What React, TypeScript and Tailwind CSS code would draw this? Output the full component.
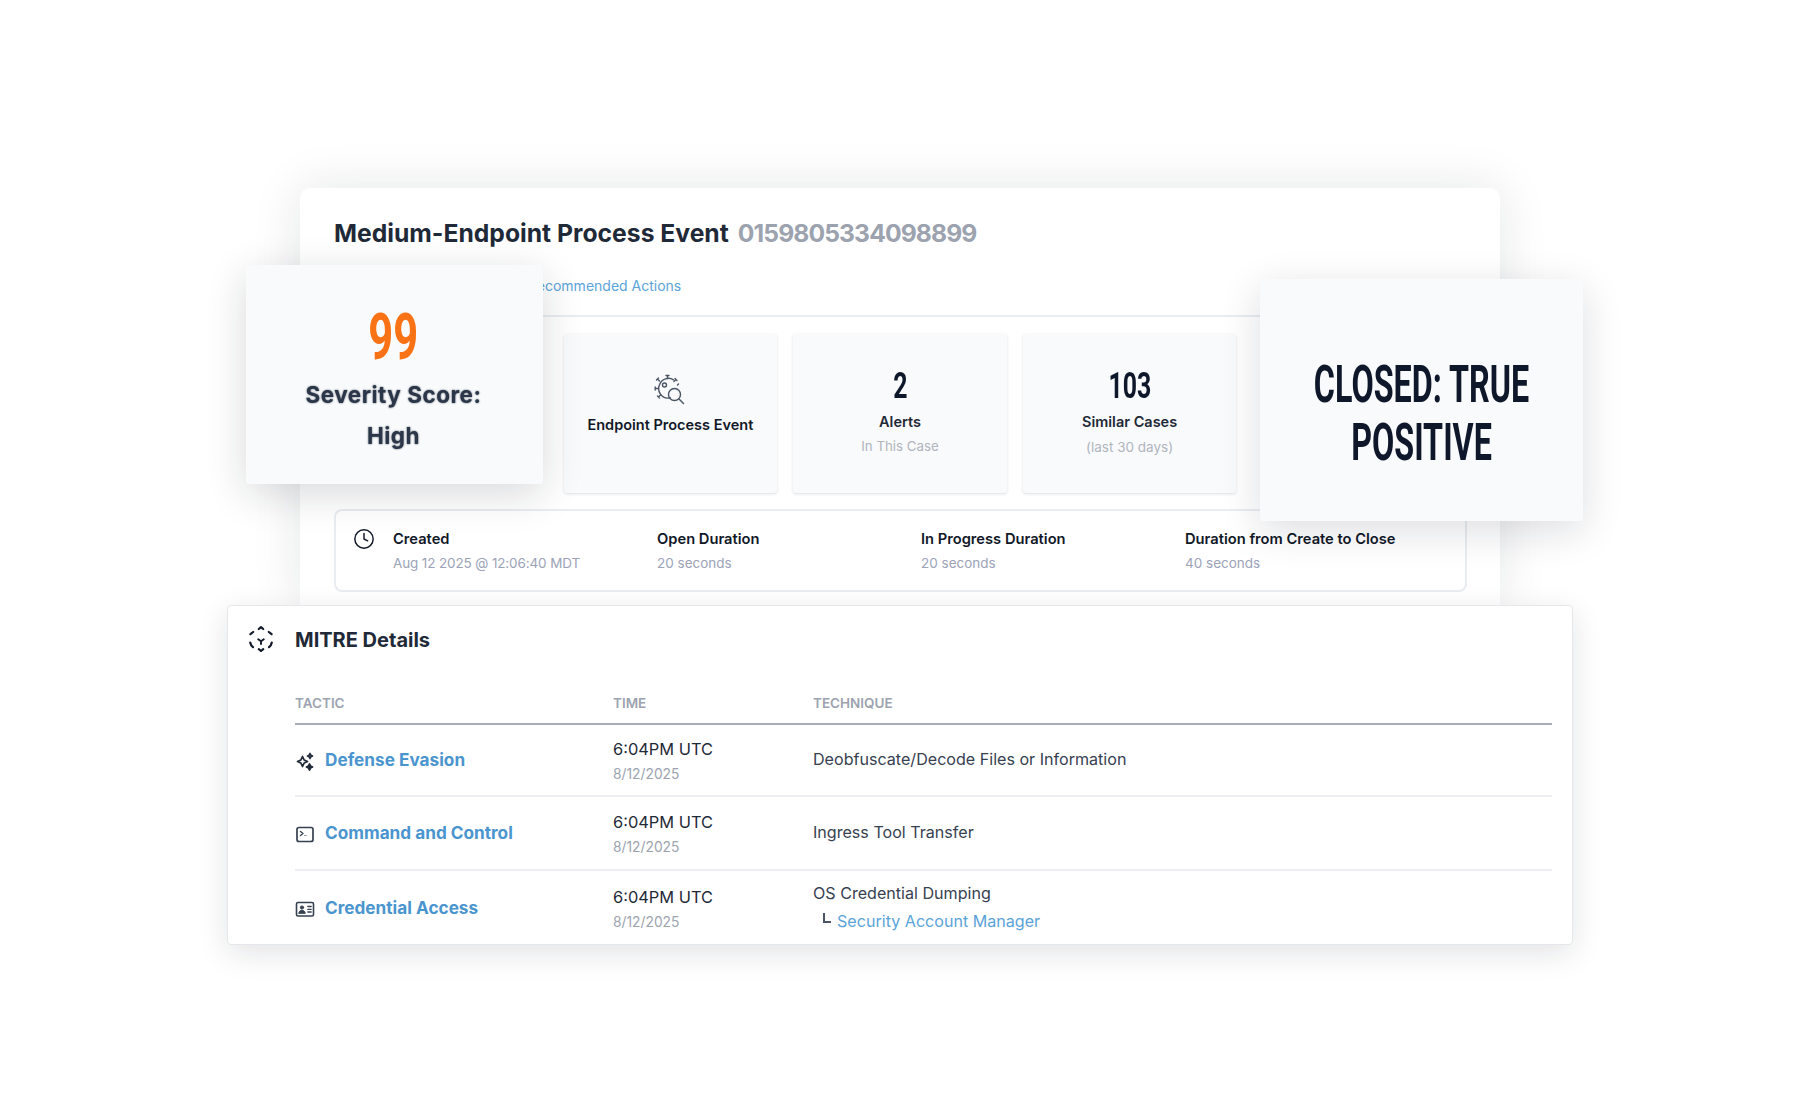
import { Clock } from 'lucide-react';

const body = 'font-["Inter","Liberation_Sans",sans-serif]';
const narrow = 'font-["Roboto","Liberation_Sans",sans-serif] font-bold inline-block whitespace-nowrap';

function VirusSearchIcon() {
  return (
    <svg width="32" height="32" viewBox="0 0 32 32" fill="none" stroke="#4b5563" strokeWidth="1.4" strokeLinecap="round">
      <path d="M19.5 5.8A9.5 9.5 0 0 0 5.6 10.5a9.5 9.5 0 0 0 .7 9.4 9.5 9.5 0 0 0 10 3.9" />
      <circle cx="10.5" cy="11" r="2" />
      <circle cx="20.5" cy="20.5" r="6" />
      <path d="M25 25l4.5 4.5" />
      <path d="M13.5 4.5V1.5M12 1.5h3M20 7.5l2-2M21 4.5l2 2M5.5 7l-2-2M2.5 6l2-2M3.8 14.5H1.2M1.2 13v3M6.5 21l-2 2M3.5 22l2 2M23.5 11l1-1" />
    </svg>
  );
}

function MitreIcon() {
  return (
    <svg width="26" height="26" viewBox="0 0 26 26" fill="none" stroke="#111827" strokeWidth="2.2" strokeLinecap="round" strokeLinejoin="round">
      <path d="M10.8 3L13 1.2L15.2 3" />
      <path d="M2.4 8.2L5.2 6" />
      <path d="M20.8 6L23.6 8.2" />
      <path d="M2.2 16.5C2.6 18.5 3.5 20 5 21.2" />
      <path d="M23.8 16.5C23.4 18.5 22.5 20 21 21.2" />
      <path d="M10.8 23.2L13 25L15.2 23.2" />
      <path d="M10.2 13.2L13 15.2L15.8 13.2M13 15.2V18" strokeWidth="1.9" />
    </svg>
  );
}

function SparkIcon() {
  return (
    <svg width="20" height="20" viewBox="0 0 20 20" fill="none" stroke="#1f2937" strokeWidth="1.7" strokeLinejoin="round">
      <path d="M7.5 5.5l1.6 3.4 3.4 1.6-3.4 1.6-1.6 3.4-1.6-3.4-3.4-1.6 3.4-1.6z" fill="#fff" />
      <path d="M15 2.5l.8 1.7 1.7.8-1.7.8-.8 1.7-.8-1.7-1.7-.8 1.7-.8z" />
      <path d="M14.5 13l1 2 2 1-2 1-1 2-1-2-2-1 2-1z" fill="#1f2937" />
    </svg>
  );
}

function TerminalIcon() {
  return (
    <svg width="20" height="20" viewBox="0 0 20 20" fill="none" stroke="#374151" strokeLinecap="round" strokeLinejoin="round">
      <rect x="2" y="3.5" width="16" height="14" rx="2" strokeWidth="1.7" />
      <path d="M5.5 7.5L8 9.5l-2.5 2" strokeWidth="1.4" />
      <path d="M9.5 11.5h2" strokeWidth="1.2" stroke="#9ca3af" />
    </svg>
  );
}

function IdCardIcon() {
  return (
    <svg width="20" height="20" viewBox="0 0 20 20" fill="none" stroke="#374151" strokeLinecap="round">
      <rect x="1.5" y="3.5" width="17" height="13.5" rx="1.5" strokeWidth="1.6" />
      <circle cx="7" cy="8.5" r="1.6" fill="#374151" strokeWidth="1" />
      <path d="M3.8 14c.4-2 1.8-2.6 3.2-2.6s2.8.6 3.2 2.6z" fill="#374151" strokeWidth="1" />
      <path d="M12.8 7.5h3.4M12.8 10.3h3.4M12.8 13h3.4" strokeWidth="1.3" />
    </svg>
  );
}

function StatCard({ children }: { children: React.ReactNode }) {
  return (
    <div className="flex h-[159px] flex-col items-center rounded-[3px] bg-[#f9fafb] shadow-[0_1px_3px_rgba(17,24,39,0.14)]">
      {children}
    </div>
  );
}

function TimeField({
  label,
  value,
  className,
  valueClass = '',
}: {
  label: string;
  value: string;
  className: string;
  valueClass?: string;
}) {
  return (
    <div className={className}>
      <div className="text-[14.7px] leading-[24px] font-semibold text-[#111827]">{label}</div>
      <div className={`text-[13.5px] leading-[24px] text-[#9ca3b8] ${valueClass}`}>{value}</div>
    </div>
  );
}

function Row({
  icon,
  tactic,
  children,
  height,
  last,
}: {
  icon: React.ReactNode;
  tactic: string;
  children: React.ReactNode;
  height: string;
  last?: boolean;
}) {
  return (
    <div className={`flex items-center ${height} ${last ? '' : 'border-b-2 border-[#eceef1]'}`}>
      <div className="flex w-[318px] items-center">
        <div className="mt-[2px] w-[30px]">{icon}</div>
        <span className="text-[17.2px] font-bold text-[#4b95cf]">{tactic}</span>
      </div>
      <div className="mt-[2px] w-[200px]">
        <div className="text-[16.4px] leading-[26px] text-[#1f2937]">6:04PM UTC</div>
        <div className="text-[13.8px] leading-[24px] text-[#9ca3af]">8/12/2025</div>
      </div>
      <div className="mb-[2px] text-[16.1px] text-[#374151]">{children}</div>
    </div>
  );
}

export default function App() {
  return (
    <div className={`relative h-[1100px] w-[1800px] overflow-hidden bg-white ${body}`}>
      <div className="flex flex-col pt-[188px]">
        <div className="ml-[300px] h-[417px] w-[1200px] rounded-t-[10px] bg-white pr-[33px] pl-[34px] shadow-[0_0_50px_rgba(17,24,39,0.11)]">
          <div className="flex h-[90px] items-center gap-[9px] pt-[1px] text-[24.7px] font-bold whitespace-nowrap">
            <span className="text-[#1f2937]">Medium-Endpoint Process Event</span>
            <span className="tracking-[-0.9px] text-[#9ca3af]">0159805334098899</span>
          </div>
          <div className="flex h-[39px] items-center border-b-2 border-[#e9ecf1] pb-[23px] pl-[194px] text-[14px] text-[#5ba3d9]">
            Recommended Actions
          </div>
          <div className="mt-[17px] mr-[1px] grid grid-cols-5 gap-[16px]">
            <div />
            <StatCard>
              <div className="mt-[40px]">
                <VirusSearchIcon />
              </div>
              <div className="mt-[8px] text-[14.5px] font-semibold text-[#111827]">Endpoint Process Event</div>
            </StatCard>
            <StatCard>
              <div className="mt-[30px] h-[44px]">
                <span className={`${narrow} scale-x-[0.69] text-[36px] leading-[44px] text-[#0f172a]`}>2</span>
              </div>
              <div className="mt-[3px] text-[14.5px] font-semibold text-[#1f2937]">Alerts</div>
              <div className="mt-[4px] text-[13.3px] text-[#b0b5bf]">In This Case</div>
            </StatCard>
            <StatCard>
              <div className="mt-[30px] h-[44px]">
                <span className={`${narrow} scale-x-[0.69] text-[36px] leading-[44px] text-[#0f172a]`}>103</span>
              </div>
              <div className="mt-[3px] text-[14.5px] font-semibold text-[#1f2937]">Similar Cases</div>
              <div className="mt-[4px] text-[13.5px] text-[#b0b5bf]">(last 30 days)</div>
            </StatCard>
            <div />
          </div>
          <div className="mt-[16px] flex h-[83px] items-center rounded-[8px] border-2 border-[#e9ecf1] pl-[17px]">
            <Clock className="mb-[24px] h-[22px] w-[22px] text-[#111827]" strokeWidth={1.6} />
            <TimeField
              className="ml-[18px] w-[264px]"
              label="Created"
              value="Aug 12 2025 @ 12:06:40 MDT"
              valueClass="tracking-[-0.13px]"
            />
            <TimeField className="w-[264px]" label="Open Duration" value="20 seconds" />
            <TimeField className="w-[264px]" label="In Progress Duration" value="20 seconds" />
            <TimeField className="" label="Duration from Create to Close" value="40 seconds" />
          </div>
        </div>

        <div className="relative z-10 ml-[227px] h-[340px] w-[1346px] rounded-[4px] border border-[#e5e7eb] bg-white pr-[20px] pl-[67px] shadow-[0_8px_30px_rgba(17,24,39,0.12)]">
          <div className="relative flex h-[57px] items-center pt-[10px] text-[20px] font-bold text-[#1f2937]">
            <div className="absolute top-[20px] left-[-47px]">
              <MitreIcon />
            </div>
            MITRE Details
          </div>
          <div className="mt-[25px] flex h-[37px] items-center border-b-2 border-[#a9adb8] pb-[5px] text-[13.5px] font-semibold text-[#9ca3af]">
            <div className="w-[318px]">TACTIC</div>
            <div className="w-[200px]">TIME</div>
            <div>TECHNIQUE</div>
          </div>
          <Row height="h-[72px]" icon={<SparkIcon />} tactic="Defense Evasion">
            Deobfuscate/Decode Files or Information
          </Row>
          <Row height="h-[74px]" icon={<TerminalIcon />} tactic="Command and Control">
            Ingress Tool Transfer
          </Row>
          <Row height="h-[74px]" icon={<IdCardIcon />} tactic="Credential Access" last>
            <div className="leading-[28px]">OS Credential Dumping</div>
            <div className="flex items-start leading-[28px]">
              <span className="mt-[6px] mr-[6px] ml-[10px] h-[10px] w-[8px] border-b-2 border-l-2 border-[#4b5563]" />
              <span className="text-[#5ba3d9]">Security Account Manager</span>
            </div>
          </Row>
        </div>
      </div>

      {/* floating callouts over the case panel */}
      <div className="absolute top-[265px] left-[246px] z-20 flex h-[219px] w-[297px] flex-col items-center rounded-[3px] bg-[#f9fafb] pr-[2px] shadow-[0_10px_40px_rgba(17,24,39,0.16)]">
        <div className="mt-[33px] h-[67px]">
          <span className={`${narrow} scale-x-[0.67] text-[65px] leading-[78px] text-[#f97316]`}>99</span>
        </div>
        <div className="mt-[9px] text-center text-[22.5px] leading-[41px] font-bold tracking-[0.5px] text-[#2b3648] blur-[0.5px] [text-shadow:0_0_2px_#4b5563]">
          Severity Score:
          <br />
          High
        </div>
      </div>

      <div className="absolute top-[279px] left-[1260px] z-20 flex h-[242px] w-[323px] flex-col items-center justify-center gap-[22px] rounded-[3px] bg-[#f9fafb] pt-[25px] text-[32.3px] leading-[36px] text-[#0f172a] shadow-[0_10px_40px_rgba(17,24,39,0.14)]">
        <span className={`${narrow} scale-y-[1.61]`}>CLOSED: TRUE</span>
        <span className={`${narrow} scale-y-[1.61]`}>POSITIVE</span>
      </div>
    </div>
  );
}
